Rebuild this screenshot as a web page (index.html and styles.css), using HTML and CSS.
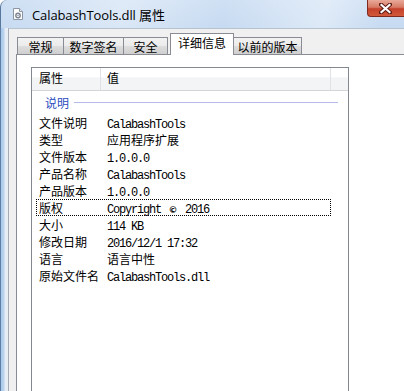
FILE: index.html
```html
<!DOCTYPE html>
<html lang="zh">
<head>
<meta charset="utf-8">
<title>CalabashTools.dll 属性</title>
<link rel="stylesheet" href="styles.css">
</head>
<body>
<div class="window">
  <div class="titlebar">
    <div class="title">
      <svg class="app-icon" width="10" height="12" viewBox="0 0 10 12">
        <path d="M0.5 0.5 H6.5 L9.5 3.5 V11.5 H0.5 Z" fill="#fdfdfd" stroke="#8b95a3"/>
        <path d="M6.5 0.5 V3.5 H9.5" fill="#e4e8ee" stroke="#8b95a3"/>
        <circle cx="5" cy="7.5" r="2.2" fill="none" stroke="#7d8590" stroke-width="1.4"/>
        <circle cx="5" cy="7.5" r="0.7" fill="#7d8590"/>
      </svg>
      <span class="title-text">CalabashTools.dll 属性</span>
    </div>
    <div class="close">
      <svg width="13" height="11" viewBox="0 0 13 11">
        <path d="M2 1.5 L11 9.5 M11 1.5 L2 9.5" stroke="#5b1a12" stroke-width="4" stroke-linecap="square"/>
        <path d="M2.5 2 L10.5 9 M10.5 2 L2.5 9" stroke="#ffffff" stroke-width="2.2" stroke-linecap="square"/>
      </svg>
    </div>
  </div>
  <div class="frame">
    <div class="frame-left"></div>
    <div class="client">
      <div class="tabs">
        <div class="tab t1">常规</div>
        <div class="tab t2">数字签名</div>
        <div class="tab t3">安全</div>
        <div class="tab t4 active">详细信息</div>
        <div class="tab t5">以前的版本</div>
      </div>
      <div class="panel">
        <div class="list">
          <div class="list-header">
            <div class="hcol c1">属性</div>
            <div class="hcol c2">值</div>
            <div class="hcol c3"></div>
          </div>
          <div class="group"><span class="group-name">说明</span><span class="group-line"></span></div>
          <div class="row"><span class="k">文件说明</span><span class="v"><span class="mono">CalabashTools</span></span></div>
          <div class="row"><span class="k">类型</span><span class="v">应用程序扩展</span></div>
          <div class="row"><span class="k">文件版本</span><span class="v"><span class="mono">1.0.0.0</span></span></div>
          <div class="row"><span class="k">产品名称</span><span class="v"><span class="mono">CalabashTools</span></span></div>
          <div class="row"><span class="k">产品版本</span><span class="v"><span class="mono">1.0.0.0</span></span></div>
          <div class="row focus"><span class="k">版权</span><span class="v"><span class="mono">Copyright </span><span class="copy">©</span><span class="mono"> 2016</span></span></div>
          <div class="row"><span class="k">大小</span><span class="v"><span class="mono">114 KB</span></span></div>
          <div class="row"><span class="k">修改日期</span><span class="v"><span class="mono">2016/12/1 17:32</span></span></div>
          <div class="row"><span class="k">语言</span><span class="v">语言中性</span></div>
          <div class="row"><span class="k">原始文件名</span><span class="v"><span class="mono">CalabashTools.dll</span></span></div>
        </div>
      </div>
    </div>
  </div>
</div>
</body>
</html>
```
FILE: styles.css
```css
html, body {
  margin: 0;
  padding: 0;
  background: #ffffff;
}
body {
  width: 404px;
  height: 391px;
  overflow: hidden;
  font-family: "Noto Sans CJK SC", "Noto Sans", sans-serif;
  font-size: 12px;
  color: #000;
}
.window {
  width: 404px;
  height: 391px;
  display: flex;
  flex-direction: column;
  overflow: hidden;
}
.titlebar {
  height: 28px;
  flex: none;
  display: flex;
  justify-content: space-between;
  align-items: flex-start;
  border-left: 1px solid #58779c;
  border-top-left-radius: 7px;
  background:
    linear-gradient(100deg, rgba(255,255,255,0) 0%, rgba(255,255,255,0.35) 30%, rgba(255,255,255,0) 55%, rgba(255,255,255,0.4) 80%, rgba(255,255,255,0) 95%),
    linear-gradient(#cfe0f4, #c6daf1);
}
.title {
  height: 28px;
  display: flex;
  align-items: center;
  padding-left: 12px;
}
.app-icon {
  display: block;
}
.title-text {
  margin-left: 9px;
  font-family: "Open Sans", "Noto Sans CJK SC", sans-serif;
  font-size: 13px;
  color: #000;
  letter-spacing: -0.1px;
}
.close {
  width: 37px;
  height: 17px;
  box-sizing: border-box;
  border: 1px solid #7e2a20;
  border-top: none;
  border-right: none;
  border-bottom-left-radius: 4px;
  background: linear-gradient(#e9a99a 0%, #d77b66 45%, #c4412b 55%, #d25a3c 100%);
  display: flex;
  align-items: center;
  justify-content: center;
  padding-right: 2px;
}
.close svg { display: block; }
.frame {
  flex: 1;
  display: flex;
  min-height: 0;
}
.frame-left {
  width: 8px;
  flex: none;
  box-sizing: border-box;
  border-left: 1px solid #5d7ea6;
  background: linear-gradient(to right, #a9c7ea 0, #bcd5f0 3px, #e4ecf5 4px, #e9eef4 7px);
}
.client {
  flex: 1;
  display: flex;
  flex-direction: column;
  background: #f0f0f0;
  border-left: 1px solid #a3aab3;
  border-top: 1px solid #b7c3d1;
  padding-left: 7px;
  min-height: 0;
}
.tabs {
  height: 25px;
  flex: none;
  display: flex;
  align-items: flex-end;
  padding-left: 1px;
}
.tab {
  height: 17px;
  box-sizing: border-box;
  border: 1px solid #898c95;
  border-bottom: none;
  background: linear-gradient(#f2f2f2 0%, #ebebeb 50%, #dddddd 51%, #cfcfcf 100%);
  display: flex;
  align-items: center;
  justify-content: center;
  line-height: 14px;
  padding-top: 1px;
}
.t1 { width: 47px; }
.t2 { width: 61px; margin-left: -1px; }
.t3 { width: 45px; margin-left: -1px; }
.t4 { width: 64px; }
.t5 { width: 69px; margin-left: -1px; }
.tab.active {
  position: relative;
  z-index: 1;
  height: 22px;
  margin-bottom: -1px;
  background: #ffffff;
  margin-left: 2px;
  align-items: flex-start;
  padding-top: 2px;
}
.panel {
  flex: 1;
  background: #ffffff;
  border-top: 1px solid #898c95;
  border-left: 1px solid #898c95;
  padding: 12px 0 0 14px;
  min-height: 0;
}
.list {
  width: 318px;
  height: 400px;
  box-sizing: border-box;
  border: 1px solid #828790;
}
.list-header {
  height: 23px;
  box-sizing: border-box;
  border-bottom: 1px solid #d5d5d5;
  display: flex;
  background: linear-gradient(#ffffff 0%, #ffffff 40%, #f3f4f6 45%, #f3f4f6 100%);
}
.hcol {
  height: 22px;
  line-height: 20px;
  box-sizing: border-box;
}
.c1 {
  width: 69px;
  padding-left: 7px;
  border-right: 1px solid #dfe2e7;
}
.c2 {
  width: 230px;
  padding-left: 6px;
  border-right: 1px solid #dfe2e7;
}
.c3 { flex: 1; }
.group {
  height: 23px;
  display: flex;
  align-items: center;
  padding-left: 13px;
  padding-right: 10px;
}
.group-name {
  color: #2b4dc0;
  line-height: 14px;
}
.group-line {
  flex: 1;
  height: 1px;
  margin-left: 5px;
  margin-top: -1px;
  background: #b5bbe8;
}
.row {
  height: 17px;
  margin: 0 17px 0 4px;
  display: grid;
  grid-template-columns: 68px 1fr;
  line-height: 17px;
  white-space: nowrap;
}
.row .k, .row .v {
  padding-left: 3px;
}
.row.focus {
  outline: 1px dotted #000;
  outline-offset: -1px;
}
.mono {
  font-family: "Liberation Mono", monospace;
  font-size: 12px;
  letter-spacing: -1.2px;
  white-space: pre;
}
.copy {
  font-family: "DejaVu Sans", sans-serif;
  font-weight: bold;
  font-size: 9px;
  display: inline-block;
  width: 12px;
  text-align: center;
}
```
